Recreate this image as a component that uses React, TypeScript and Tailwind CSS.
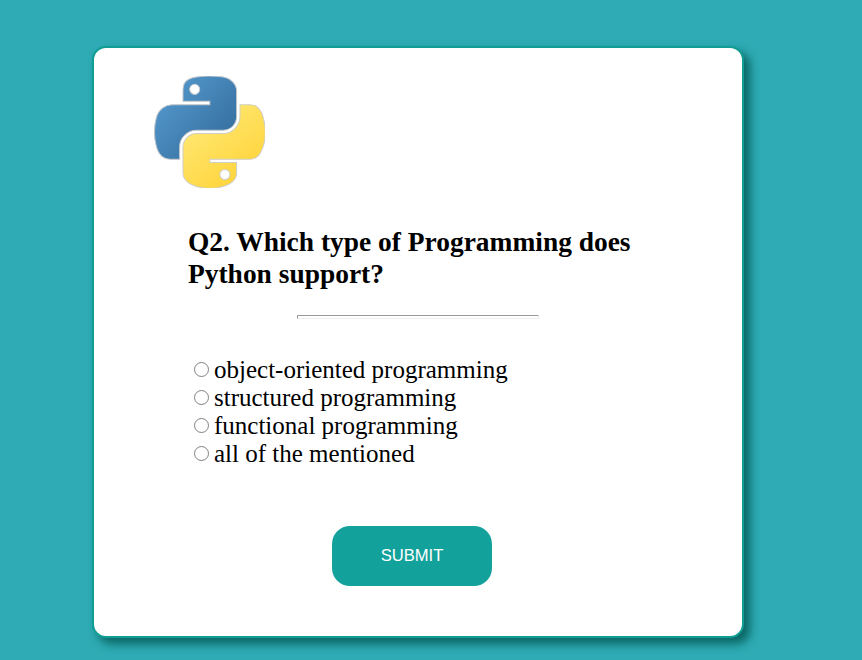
import React from "react";

const options = [
  "object-oriented programming",
  "structured programming",
  "functional programming",
  "all of the mentioned",
];

function PythonLogo() {
  return (
    <svg width="111" height="112" viewBox="0 0 110.4 111.9" className="block blur-[0.5px]">
      <defs>
        <linearGradient id="pb" x1="0" y1="0" x2="1" y2="0.9">
          <stop offset="0" stopColor="#5A9FD4" />
          <stop offset="1" stopColor="#306998" />
        </linearGradient>
        <linearGradient id="py" x1="0.8" y1="0.85" x2="0.25" y2="0.1">
          <stop offset="0" stopColor="#FFD43B" />
          <stop offset="1" stopColor="#FFE873" />
        </linearGradient>
      </defs>
      <path
        fill="url(#pb)"
        stroke="#c4c8cc"
        strokeWidth="1"
        d="M54.918785,0.00091927 C50.335132,0.02221727 45.957846,0.41313697 42.106285,1.0946693 30.760069,3.0991731 28.700036,7.2947714 28.700035,15.032169 v10.21875 h26.8125 v3.40625 h-26.8125 -10.0625 c-7.792459,0 -14.6157588,4.683717 -16.7499998,13.59375 -2.46181998,10.212966 -2.57101508,16.586023 0,27.25 1.9059283,7.937852 6.4575432,13.593748 14.2499998,13.59375 h9.21875 v-12.25 c0,-8.849902 7.657144,-16.656248 16.75,-16.65625 h26.78125 c7.454951,0 13.406253,-6.138164 13.40625,-13.625 v-25.53125 c0,-7.2663386 -6.12998,-12.7247771 -13.40625,-13.9374997 C64.281548,0.32794397 59.502438,-0.02037903 54.918785,0.00091927 Z m-14.5,8.21875012579 c2.769547,0 5.03125,2.2986456 5.03125,5.1249996 -2e-6,2.816336 -2.261703,5.09375 -5.03125,5.09375 -2.779476,-1e-6 -5.03125,-2.277415 -5.03125,-5.09375 -10e-7,-2.826353 2.251774,-5.1249996 5.03125,-5.1249996 z"
      />
      <path
        fill="url(#py)"
        stroke="#cfcfc4"
        strokeWidth="1"
        d="m85.637535,28.657169 v11.90625 c0,9.230755 -7.825895,16.999999 -16.75,17 h-26.78125 c-7.335833,0 -13.406249,6.278483 -13.40625,13.625 v25.531247 c0,7.266344 6.318588,11.540324 13.40625,13.625004 8.487331,2.49561 16.626237,2.94663 26.78125,0 6.750155,-1.95439 13.406253,-5.88761 13.40625,-13.625004 V86.500919 h-26.78125 v-3.40625 h26.78125 13.406254 c7.792461,0 10.696251,-5.435408 13.406241,-13.59375 2.79933,-8.398886 2.74022,-16.475776 0,-27.25 -1.92578,-7.757441 -5.60387,-13.59375 -13.406241,-13.59375 z m-15.0625,64.65625 c2.779478,3e-6 5.03125,2.277417 5.03125,5.093747 -2e-6,2.826354 -2.251775,5.125004 -5.03125,5.125004 -2.76955,0 -5.03125,-2.29865 -5.03125,-5.125004 2e-6,-2.81633 2.261697,-5.093747 5.03125,-5.093747 z"
      />
    </svg>
  );
}

export default function App() {
  return (
    <div className="h-[660px] w-[862px] overflow-hidden bg-[#2eabb4] pt-[46px] pl-[92px] font-['Liberation_Serif',serif]">
      <div className="h-[592px] w-[652px] rounded-[14px] border-2 border-[#0f9d94] bg-white pt-[28px] pl-[60px] shadow-[6px_6px_10px_#0a6663]">
        <PythonLogo />
        <h2 className="mt-[38px] ml-[34px] w-[480px] text-[27.45px] leading-[32px] font-bold text-black">
          Q2. Which type of Programming does Python support?
        </h2>
        <div className="mt-[25px] ml-[143px] h-[4px] w-[242px] border border-t-[#9a9a9a] border-r-[#eeeeee] border-b-[#eeeeee] border-l-[#9a9a9a]" />
        <div className="mt-[37px] ml-[40px]">
          {options.map((o) => (
            <label key={o} className="flex h-[28px] items-center text-[25px] leading-[28px] text-black">
              <input
                type="radio"
                name="q"
                className="m-0 mr-[5px] mb-[2px] h-[15px] w-[15px] appearance-none rounded-full border-[1.5px] border-[#808080] bg-white"
              />
              {o}
            </label>
          ))}
        </div>
        <button className="mt-[58px] ml-[178px] block h-[60px] w-[160px] rounded-[18px] bg-[#13a19b] font-['Liberation_Sans',sans-serif] text-[16.6px] text-white">
          SUBMIT
        </button>
      </div>
    </div>
  );
}
